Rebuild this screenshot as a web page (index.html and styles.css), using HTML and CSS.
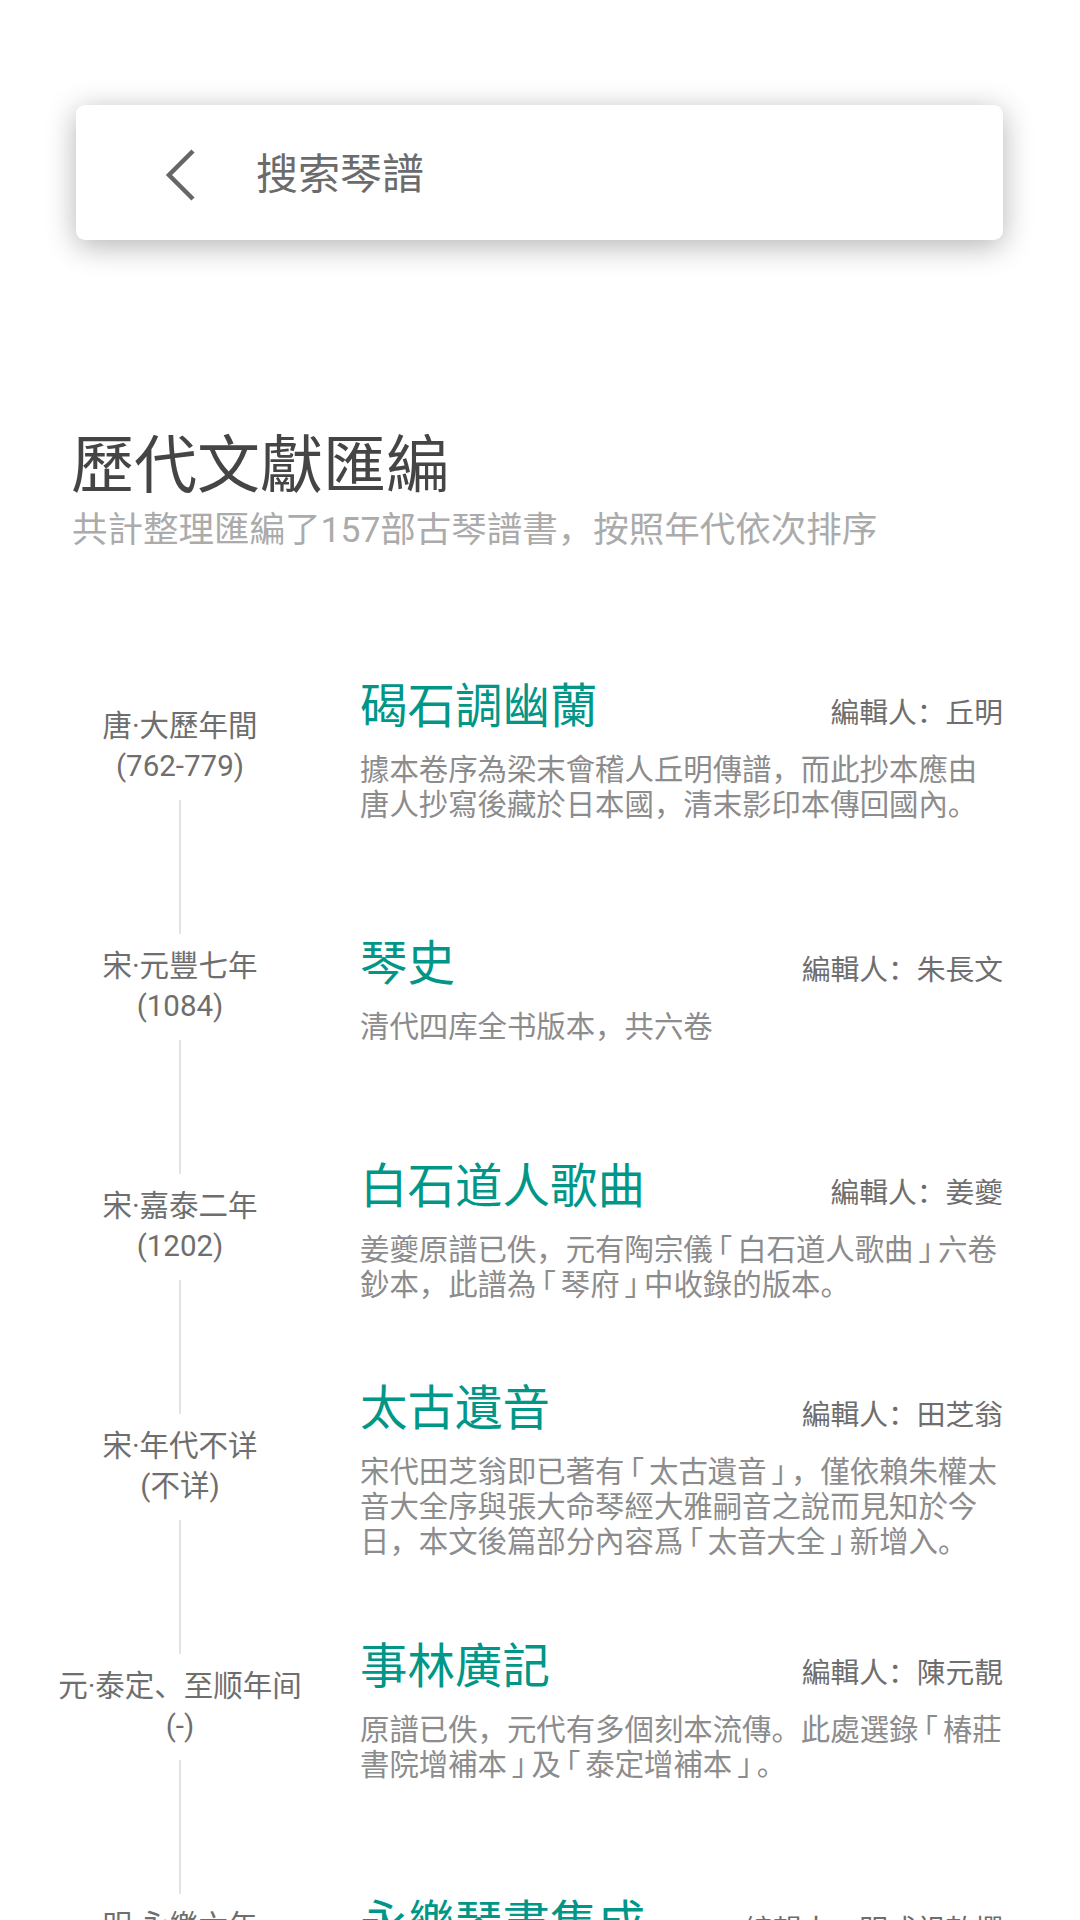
FILE: index.html
```html
<!DOCTYPE html>
<html lang="zh">
<head>
<meta charset="utf-8">
<title>歷代文獻匯編</title>
<link rel="stylesheet" href="styles.css">
</head>
<body>
<header class="search-card">
  <svg class="back" viewBox="0 0 31 52" width="31" height="52" aria-hidden="true">
    <polyline points="28,2 4,26 28,50" fill="none" stroke="#666" stroke-width="4.5" stroke-linejoin="miter"/>
  </svg>
  <span class="search-text">搜索琴譜</span>
</header>

<section class="intro">
  <h1 class="heading">歷代文獻匯編</h1>
  <p class="subheading">共計整理匯編了157部古琴譜書，按照年代依次排序</p>
</section>

<section class="timeline">
  <article class="item">
    <div class="date">唐·大歷年間<br>(762-779)</div>
    <div class="rail"></div>
    <div class="body">
      <div class="title-row"><span class="title">碣石調幽蘭</span><span class="editor">編輯人：丘明</span></div>
      <p class="desc">據本卷序為梁末會稽人丘明傳譜，而此抄本應由唐人抄寫後藏於日本國，清末影印本傳回國內。</p>
    </div>
  </article>
  <article class="item">
    <div class="date">宋·元豐七年<br>(1084)</div>
    <div class="rail"></div>
    <div class="body">
      <div class="title-row"><span class="title">琴史</span><span class="editor">編輯人：朱長文</span></div>
      <p class="desc">清代四库全书版本，共六卷</p>
    </div>
  </article>
  <article class="item">
    <div class="date">宋·嘉泰二年<br>(1202)</div>
    <div class="rail"></div>
    <div class="body">
      <div class="title-row"><span class="title">白石道人歌曲</span><span class="editor">編輯人：姜夔</span></div>
      <p class="desc">姜夔原譜已佚，元有陶宗儀<span class="bk">｢</span>白石道人歌曲<span class="bk">｣</span>六卷鈔本，此譜為<span class="bk">｢</span>琴府<span class="bk">｣</span>中收錄的版本。</p>
    </div>
  </article>
  <article class="item">
    <div class="date">宋·年代不详<br>(不详)</div>
    <div class="rail"></div>
    <div class="body">
      <div class="title-row"><span class="title">太古遺音</span><span class="editor">編輯人：田芝翁</span></div>
      <p class="desc">宋代田芝翁即已著有<span class="bk">｢</span>太古遺音<span class="bk">｣</span>，僅依賴朱權太音大全序與張大命琴經大雅嗣音之說而見知於今日，本文後篇部分內容爲<span class="bk">｢</span>太音大全<span class="bk">｣</span>新增入。</p>
    </div>
  </article>
  <article class="item">
    <div class="date">元·泰定、至顺年间<br>(-)</div>
    <div class="rail"></div>
    <div class="body">
      <div class="title-row"><span class="title">事林廣記</span><span class="editor">編輯人：陳元靚</span></div>
      <p class="desc">原譜已佚，元代有多個刻本流傳。此處選錄<span class="bk">｢</span>椿莊書院增補本<span class="bk">｣</span>及<span class="bk">｢</span>泰定增補本<span class="bk">｣</span>。</p>
    </div>
  </article>
  <article class="item">
    <div class="date">明·永樂六年<br>(1408)</div>
    <div class="rail"></div>
    <div class="body">
      <div class="title-row"><span class="title">永樂琴書集成</span><span class="editor">編輯人：明成祖敕撰</span></div>
      <p class="desc">明成祖敕令編纂，共二十卷。</p>
    </div>
  </article>
</section>
</body>
</html>
```

FILE: styles.css
```css
html, body {
  margin: 0;
  padding: 0;
  background: #ffffff;
}

body {
  font-family: Roboto, "Noto Sans CJK SC", "Noto Sans CJK TC", sans-serif;
  color: #444;
}

.search-card {
  display: flex;
  align-items: center;
  gap: 60px;
  height: 135px;
  margin: 105px 77px 0 76px;
  padding: 4px 0 0 89px;
  box-sizing: border-box;
  background: #fff;
  border-radius: 9px;
  box-shadow: 0 6px 30px rgba(0, 0, 0, 0.3);
}

.back {
  display: block;
  flex: none;
}

.search-text {
  font-size: 42px;
  line-height: 56px;
  color: #6b6b6b;
}

.intro {
  padding: 0 78px 0 71px;
  margin-top: 188px;
}

.heading {
  margin: 0;
  font-size: 63px;
  line-height: 76px;
  font-weight: 400;
  color: #454545;
}

.subheading {
  margin: 5px 0 0 1px;
  font-size: 35.5px;
  line-height: 42px;
  color: #ababab;
}

.timeline {
  margin-top: 153px;
  padding: 0 77px 0 50px;
}

.item {
  display: grid;
  grid-template-columns: 260px 1fr;
  grid-template-rows: 84px 156px;
  column-gap: 50px;
  height: 240px;
}

.date {
  grid-column: 1;
  grid-row: 1;
  padding-top: 2px;
  text-align: center;
  white-space: nowrap;
  font-size: 29.5px;
  line-height: 40px;
  color: #6e6e6e;
}

.rail {
  grid-column: 1;
  grid-row: 2;
  justify-self: center;
  width: 2px;
  margin: 12px 0 10px;
  background: #e3e3e3;
}

.body {
  grid-column: 2;
  grid-row: 1;
  display: flex;
  flex-direction: column;
  justify-content: center;
  padding-top: 9px;
  box-sizing: border-box;
  min-height: 0;
}

.title-row {
  display: flex;
  justify-content: space-between;
  align-items: baseline;
}

.title {
  font-size: 47.5px;
  line-height: 56px;
  color: #009688;
  white-space: nowrap;
}

.editor {
  font-size: 28.75px;
  line-height: 40px;
  color: #6e6e6e;
  white-space: nowrap;
}

.desc {
  margin: 18px -3px 0 0;
  font-size: 29.4px;
  line-height: 35px;
  color: #8c8c8c;
}

.bk {
  padding: 0 4.9px;
}
```
